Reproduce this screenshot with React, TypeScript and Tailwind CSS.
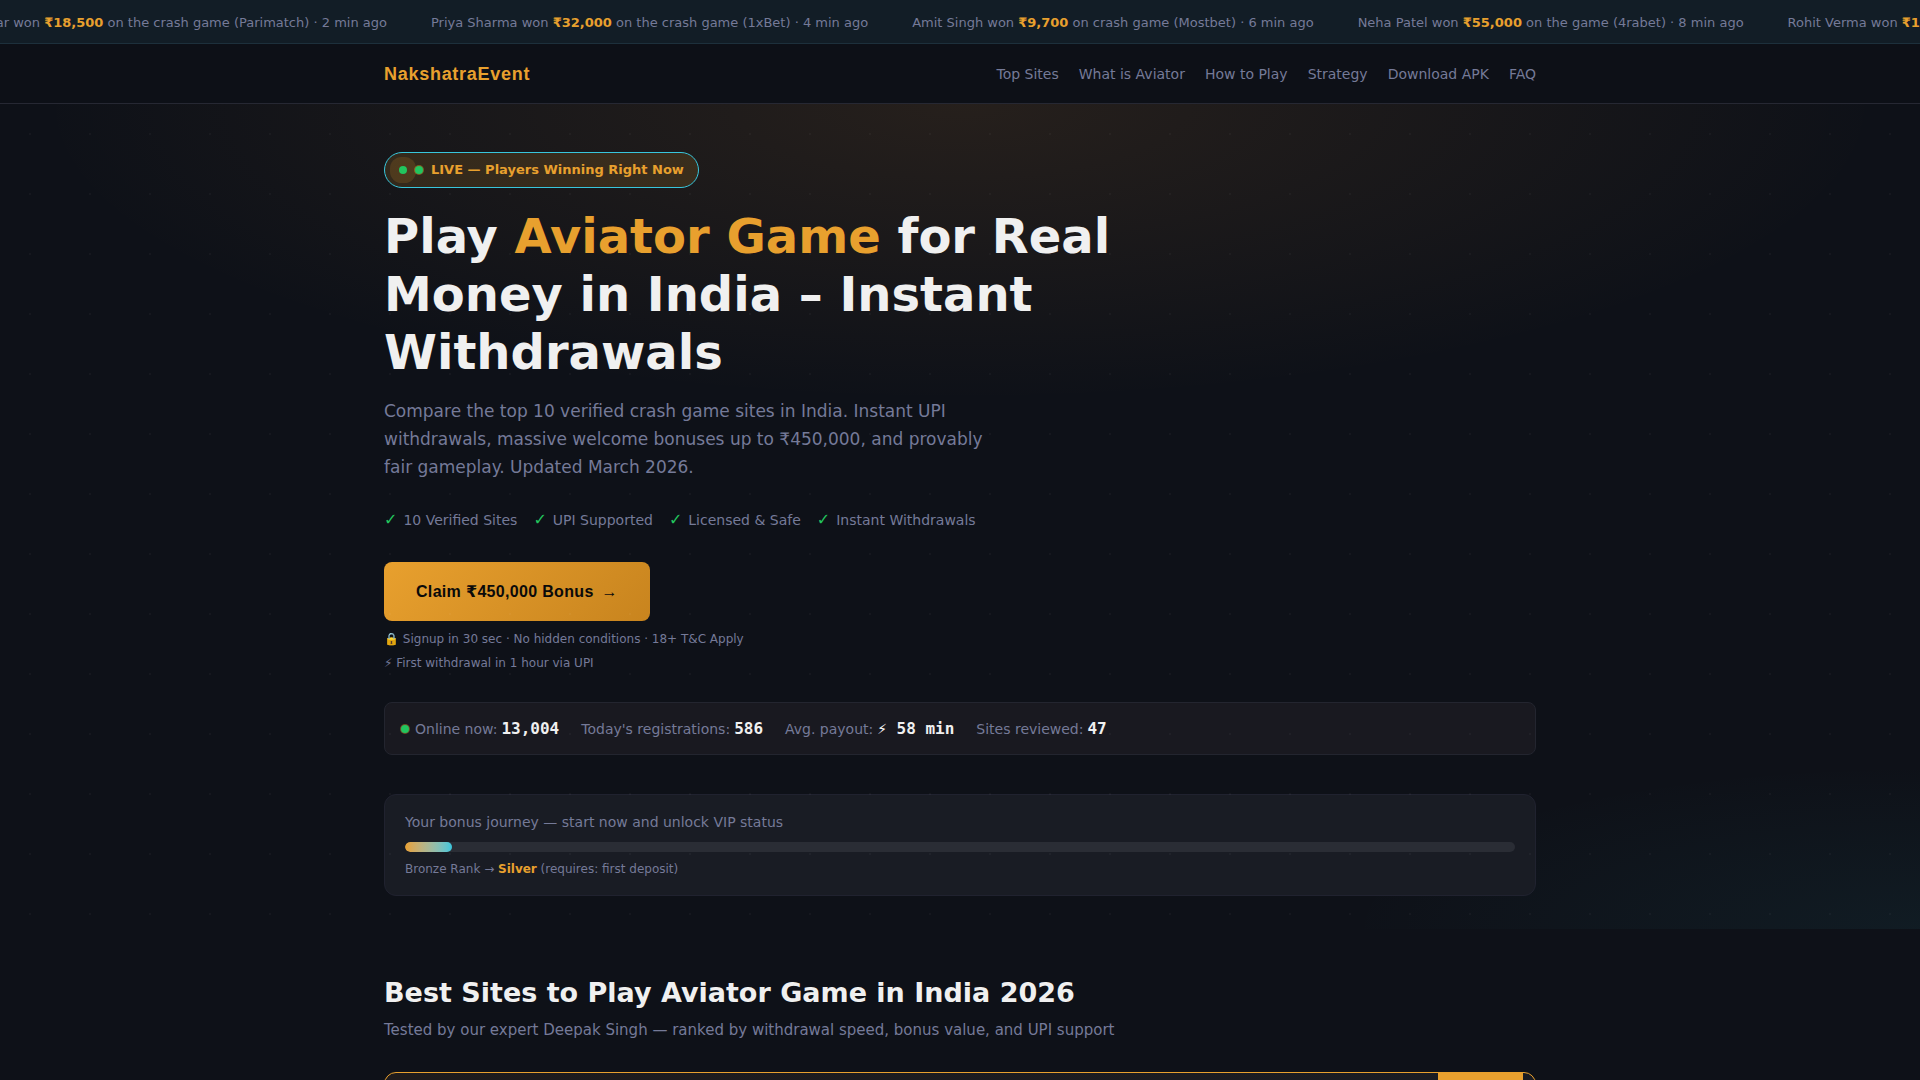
import { Fragment } from 'react'

// ── Content ───────────────────────────────────────────────────────────────────

interface Win {
    name: string
    amount: string
    detail: string
}

const WINS: Win[] = [
    { name: 'Rahul Kumar', amount: '₹18,500', detail: 'on the crash game (Parimatch) · 2 min ago' },
    { name: 'Priya Sharma', amount: '₹32,000', detail: 'on the crash game (1xBet) · 4 min ago' },
    { name: 'Amit Singh', amount: '₹9,700', detail: 'on crash game (Mostbet) · 6 min ago' },
    { name: 'Neha Patel', amount: '₹55,000', detail: 'on the game (4rabet) · 8 min ago' },
    { name: 'Rohit Verma', amount: '₹14,200', detail: 'on the crash game (1Win) · 11 min ago' },
]

const NAV_LINKS = [
    { label: 'Top Sites', href: '#top-sites' },
    { label: 'What is Aviator', href: '#what-is' },
    { label: 'How to Play', href: '#how-to-play' },
    { label: 'Strategy', href: '#strategy' },
    { label: 'Download APK', href: '#download' },
    { label: 'FAQ', href: '#faq' },
]

const TRUST_POINTS = ['10 Verified Sites', 'UPI Supported', 'Licensed & Safe', 'Instant Withdrawals']

const CTA_NOTES = [
    '🔒 Signup in 30 sec · No hidden conditions · 18+ T&C Apply',
    '⚡ First withdrawal in 1 hour via UPI',
]

const STATS = [
    { label: 'Online now:', value: '13,004', live: true },
    { label: "Today's registrations:", value: '586' },
    { label: 'Avg. payout:', value: '⚡ 58 min' },
    { label: 'Sites reviewed:', value: '47' },
]

const JOURNEY_PERCENT = 4.2

// ── Sections ──────────────────────────────────────────────────────────────────

function Ticker() {
    return (
        <div className="overflow-hidden border-b border-[#1d303c] bg-[#121d26] pt-[13px] pb-[11px]">
            <div className="flex w-max -translate-x-[74px] gap-11 text-[13px]/[19px] whitespace-nowrap">
                {WINS.map(({ name, amount, detail }) => (
                    <span key={name}>
                        {name} won <strong className="font-bold text-[#e8a02e]">{amount}</strong> {detail}
                    </span>
                ))}
            </div>
        </div>
    )
}

function Header() {
    return (
        <header className="border-b border-[#262833] bg-[#0d1017]">
            <div className="mx-auto flex h-[59px] max-w-[1200px] items-center justify-between px-6">
                <a
                    href="#"
                    className="font-['Liberation_Sans',sans-serif] text-lg font-bold tracking-[0.04em] text-[#e8a02e]"
                >
                    NakshatraEvent
                </a>
                <nav className="flex gap-5 text-sm">
                    {NAV_LINKS.map(({ label, href }) => (
                        <a key={href} href={href}>
                            {label}
                        </a>
                    ))}
                </nav>
            </div>
        </header>
    )
}

function LiveBadge() {
    return (
        <div className="flex h-9 w-max items-center gap-2 rounded-full border border-[#38c6dc] bg-[#e8a02e]/14 px-3.5 text-[13px] font-bold text-[#e8a02e]">
            <span className="size-2 rounded-full bg-[#22c55e] shadow-[0_0_0_9px_rgba(232,160,46,0.15)]" />
            <span className="size-2 rounded-full bg-[#22c55e] shadow-[0_0_0_1px_rgba(232,160,46,0.4)]" />
            LIVE — Players Winning Right Now
        </div>
    )
}

function StatsBar() {
    return (
        <div className="mt-[27px] flex h-[53px] items-center gap-[22px] rounded-lg border border-[#23252f] bg-[#191920] px-4 text-sm">
            {STATS.map(({ label, value, live }) => (
                <span key={label} className="flex items-center gap-1">
                    {live && (
                        <span className="mr-0.5 size-2 rounded-full bg-[#22c55e] shadow-[0_0_0_1px_rgba(232,160,46,0.4)]" />
                    )}
                    {label}
                    <strong className="font-['DejaVu_Sans_Mono',monospace] text-base font-bold text-[#f0f0f0]">
                        {value}
                    </strong>
                </span>
            ))}
        </div>
    )
}

function BonusJourney() {
    return (
        <div className="mt-[39px] rounded-xl border border-[#20222f] bg-[#191c24] px-5 py-4">
            <p className="text-sm/[22px]">Your bonus journey — start now and unlock VIP status</p>
            <div className="mt-[9px] mb-[7px] h-2.5 overflow-hidden rounded-full bg-[#2a2d35]">
                <div
                    className="h-full rounded-full bg-linear-to-r from-[#e8a02e] to-[#38c6dc]"
                    style={{ width: `${JOURNEY_PERCENT}%` }}
                />
            </div>
            <p className="text-xs/[20px]">
                Bronze Rank → <strong className="font-bold text-[#e8a02e]">Silver</strong> (requires: first deposit)
            </p>
        </div>
    )
}

function Hero() {
    return (
        <section className="relative bg-[radial-gradient(ellipse_80%_60%_at_50%_0%,rgba(232,150,60,0.11),transparent_60%),radial-gradient(ellipse_60%_40%_at_100%_100%,rgba(60,200,220,0.06),transparent_50%)]">
            <div className="mx-auto max-w-[1200px] px-6 pt-12 pb-[33px]">
                <LiveBadge />
                <h1 className="mt-[19px] max-w-[800px] text-5xl/[58px] font-bold text-[#f0f0f0]">
                    Play <span className="text-[#e8a02e]">Aviator Game</span> for Real Money in India – Instant
                    Withdrawals
                </h1>
                <p className="mt-4 max-w-[600px] text-[17px]/[28px]">
                    Compare the top 10 verified crash game sites in India. Instant UPI withdrawals, massive welcome
                    bonuses up to ₹450,000, and provably fair gameplay. Updated March 2026.
                </p>
                <ul className="mt-7 flex flex-wrap gap-4 text-sm/[22px]">
                    {TRUST_POINTS.map((point) => (
                        <li key={point} className="flex items-center gap-1.5">
                            <span className="text-base/[22px] text-[#22c55e]">✓</span>
                            {point}
                        </li>
                    ))}
                </ul>
                <button
                    type="button"
                    className="mt-[31px] flex h-[59px] items-center gap-2 rounded-lg bg-linear-135 from-[#e8a02e] to-[#c8841e] px-8 font-['Liberation_Sans','DejaVu_Sans',sans-serif] text-base font-bold tracking-[0.02em] text-[#0a0a0a]"
                >
                    Claim ₹450,000 Bonus <span>→</span>
                </button>
                <p className="mt-1.5 text-xs/[24px]">
                    {CTA_NOTES.map((note) => (
                        <Fragment key={note}>
                            {note}
                            <br />
                        </Fragment>
                    ))}
                </p>
                <StatsBar />
                <BonusJourney />
            </div>
            {/* dot grid laid over the whole hero */}
            <div className="pointer-events-none absolute inset-0 bg-[radial-gradient(circle_at_center,rgba(255,255,255,0.03)_1px,transparent_1px)] bg-size-[60px_60px]" />
        </section>
    )
}

function TopSites() {
    return (
        <section id="top-sites" className="mx-auto max-w-[1200px] px-6 pt-12">
            <h2 className="text-[27px]/[32px] font-bold text-[#f0f0f0]">Best Sites to Play Aviator Game in India 2026</h2>
            <p className="mt-[9px] text-[15px]/[24px]">
                Tested by our expert Deepak Singh — ranked by withdrawal speed, bonus value, and UPI support
            </p>
            <article className="mt-[30px] flex h-40 justify-end rounded-xl border border-[#e8a02e] bg-linear-135 from-[#1e1b1c] to-[#191c24] pr-3">
                <span className="h-7 w-[85px] rounded-b-lg bg-[#e8a02e]" />
            </article>
        </section>
    )
}

export default function App() {
    return (
        <div className="h-screen overflow-hidden bg-[#0e1118] font-['DejaVu_Sans',sans-serif] text-[#757a98]">
            <Ticker />
            <Header />
            <main>
                <Hero />
                <TopSites />
            </main>
        </div>
    )
}
